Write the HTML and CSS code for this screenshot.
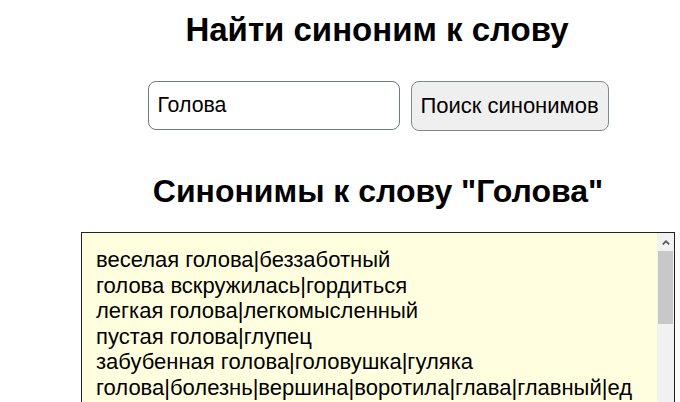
FILE: index.html
```html
<!DOCTYPE html>
<html lang="ru">
<head>
<meta charset="utf-8">
<title>Найти синоним к слову</title>
<link rel="stylesheet" href="styles.css">
</head>
<body>
<main class="page">
  <h1 class="title">Найти синоним к слову</h1>
  <form class="search">
    <input class="search-input" type="text" value="Голова">
    <button class="search-btn" type="button">Поиск синонимов</button>
  </form>
  <h2 class="subtitle">Синонимы к слову "Голова"</h2>
  <div class="results-box">
    <textarea class="results" readonly>веселая голова|беззаботный
голова вскружилась|гордиться
легкая голова|легкомысленный
пустая голова|глупец
забубенная голова|головушка|гуляка
голова|болезнь|вершина|воротила|глава|главный|ед
голова|башка|бестолковка|головка|котелок
кочан|кумпол|макитра|репа|тыква|черепушка
голова садовая|рассеянный
голова идет кругом|путаться</textarea>
    <div class="scrollbar" aria-hidden="true">
      <div class="scroll-up">
        <svg width="8" height="5" viewBox="0 0 8 5"><path d="M0.8 4.4 L4 1.2 L7.2 4.4" fill="none" stroke="#505050" stroke-width="1.6"/></svg>
      </div>
      <div class="scroll-thumb"></div>
    </div>
  </div>
</main>
</body>
</html>
```

FILE: styles.css
```css
html, body {
  margin: 0;
  padding: 0;
  background: #ffffff;
}

body {
  font-family: "Liberation Sans", Arial, sans-serif;
  color: #000;
}

.page {
  width: 594px;
  margin-left: 81px;
  padding-top: 11px;
  display: flex;
  flex-direction: column;
  align-items: center;
}

.title {
  margin: 0 2px 0 0;
  font-size: 33px;
  font-weight: bold;
  line-height: 38px;
}

.search {
  margin-top: 32px;
  display: flex;
  gap: 11px;
}

.search-input {
  box-sizing: border-box;
  width: 252px;
  height: 49px;
  padding: 0 9px;
  font-family: "Liberation Sans", Arial, sans-serif;
  font-size: 21.3px;
  color: #000;
  border: 1px solid #6b7a86;
  border-radius: 8px;
  background: #fff;
}

.search-btn {
  box-sizing: border-box;
  width: 198px;
  height: 50px;
  padding: 0 6px;
  font-family: "Liberation Sans", Arial, sans-serif;
  font-size: 22px;
  color: #000;
  border: 1px solid #7d8a93;
  border-radius: 8px;
  background: #efefef;
}

.subtitle {
  margin: 42px 0 0;
  font-size: 32px;
  font-weight: bold;
  line-height: 37px;
}

.results-box {
  box-sizing: border-box;
  align-self: stretch;
  margin-top: 22px;
  height: 250px;
  display: flex;
  border: 1px solid #222;
  background: #ffffe0;
}

.results {
  flex: 1;
  min-width: 0;
  margin: 0;
  padding: 14px 14px;
  font-family: "Liberation Sans", Arial, sans-serif;
  font-size: 22px;
  line-height: 25.6px;
  color: #000;
  background: transparent;
  border: none;
  outline: none;
  resize: none;
  overflow: hidden;
}

.scrollbar {
  width: 17px;
  flex: none;
  display: flex;
  flex-direction: column;
  background: #f1f1f1;
}

.scroll-up {
  height: 18px;
  display: flex;
  align-items: center;
  justify-content: center;
}

.scroll-thumb {
  height: 73px;
  margin: 0 1px;
  background: #c8c8c8;
}
```
